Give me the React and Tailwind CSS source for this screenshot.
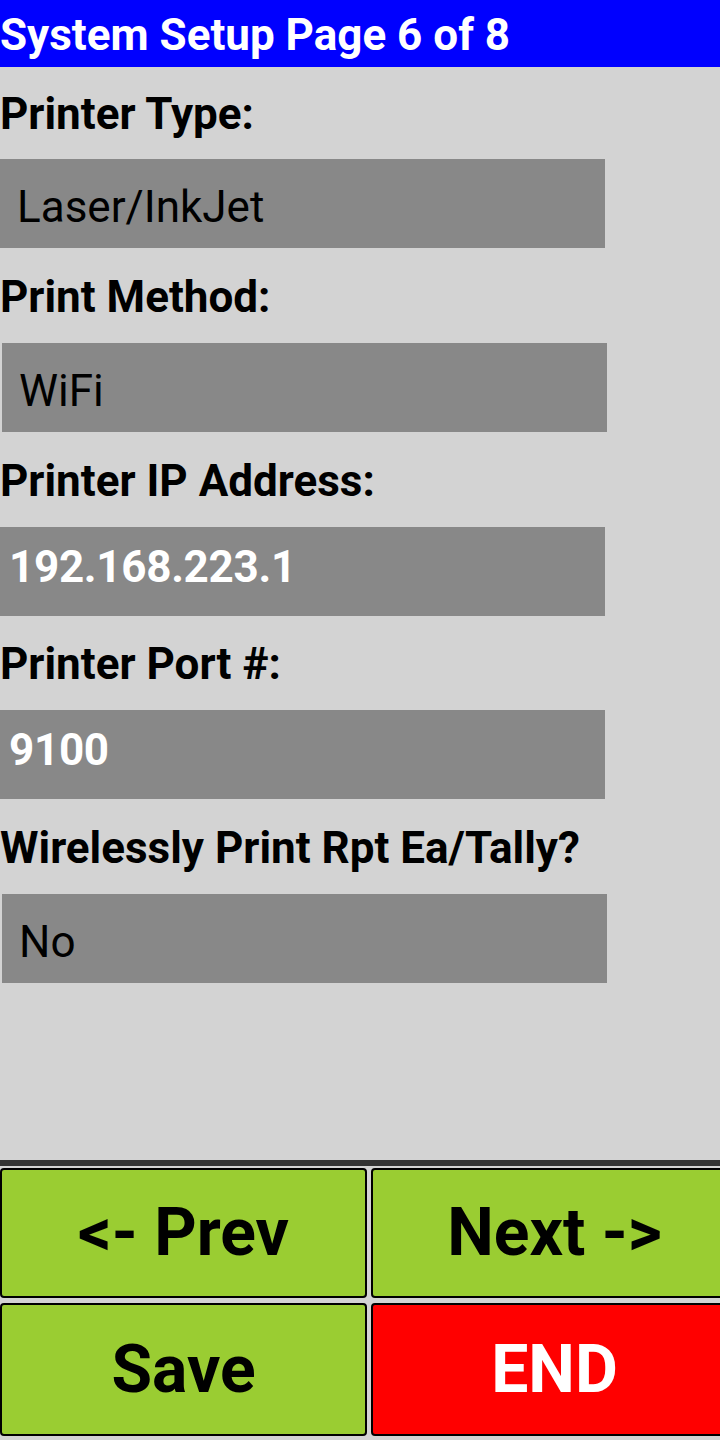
import React from "react";

const FIELDS = [
  { label: "Printer Type:", value: "Laser/InkJet", labelH: "h-[92px]", shift: false, bold: false },
  { label: "Print Method:", value: "WiFi", labelH: "h-[95px]", shift: true, bold: false },
  { label: "Printer IP Address:", value: "192.168.223.1", labelH: "h-[95px]", shift: false, bold: true },
  { label: "Printer Port #:", value: "9100", labelH: "h-[94px]", shift: false, bold: true },
  { label: "Wirelessly Print Rpt Ea/Tally?", value: "No", labelH: "h-[95px]", shift: true, bold: false },
];

const Field = ({ label, value, labelH, shift, bold }) => (
  <div>
    <div className={`${labelH} pt-[2px] flex items-center font-bold text-[44px] text-black`}>
      {label}
    </div>
    <div
      className={
        "h-[89px] w-[605px] bg-[#888888] flex items-center " +
        (shift ? "ml-[2px] " : "") +
        (bold
          ? "pl-[9px] pb-[10px] font-bold text-[44px] tracking-[-0.3px] text-white"
          : "pl-[17px] pt-[6px] text-black")
      }
    >
      {value}
    </div>
  </div>
);

const NavButton = ({ children, red }) => (
  <button
    className={
      "w-[367px] h-full rounded-[4px] border-2 border-black flex items-center justify-center font-bold text-[66px] leading-none " +
      (red ? "bg-[#ff0000] text-white" : "bg-[#9acd32] text-black")
    }
  >
    {children}
  </button>
);

export default function App() {
  return (
    <div className="w-[720px] h-[1440px] overflow-hidden bg-[#d3d3d3] flex flex-col font-['Roboto',sans-serif] text-[44px] leading-none">
      {/* header */}
      <div className="h-[67px] shrink-0 pt-[3px] bg-[#0000ff] text-white font-bold text-[44px] flex items-center">
        System Setup Page 6 of 8
      </div>

      {/* settings */}
      <div className="flex-1">
        {FIELDS.map((f) => (
          <Field key={f.label} {...f} />
        ))}
      </div>

      {/* nav buttons */}
      <div className="h-[280px] shrink-0 border-t-[6px] border-[#333333] pt-[2px] pb-[4px] grid grid-cols-[367px_367px] grid-rows-[130px_133px] gap-x-[4px] gap-y-[5px]">
        <NavButton>&lt;- Prev</NavButton>
        <NavButton>Next -&gt;</NavButton>
        <NavButton>Save</NavButton>
        <NavButton red>END</NavButton>
      </div>
    </div>
  );
}
